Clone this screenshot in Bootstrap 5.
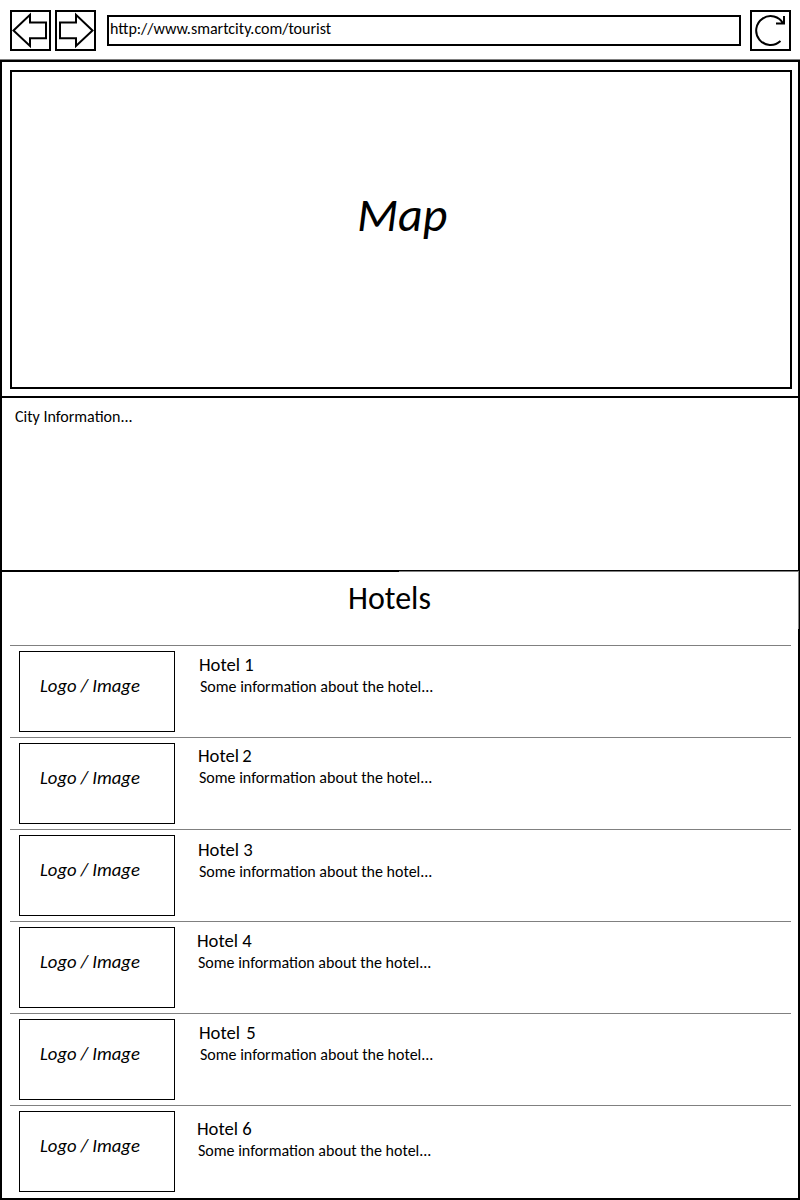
<!DOCTYPE html>
<html lang="en">
<head>
<meta charset="utf-8">
<meta name="viewport" content="width=device-width, initial-scale=1">
<title>Smart City – Tourist</title>
<link href="https://cdn.jsdelivr.net/npm/bootstrap@5.3.0/dist/css/bootstrap.min.css" rel="stylesheet">
<style>
body{font-family:Calibri,Carlito,Lato,sans-serif;font-size:16px;color:#000;background:#fff;width:800px;height:1200px;overflow:hidden}
.ln{white-space:nowrap;line-height:20px;margin:0;font-weight:400}
.toolbar-top{height:59px;padding:10px 9px 0 10px}
.sq{width:41px;height:41px;border:2px solid #000;border-radius:0;background:#fff;padding:0;flex:none}
.sq + .sq{margin-left:4px}
.sq svg{display:block;fill:none;stroke:#000;stroke-width:2}
.address{width:634px;height:31px;margin:5px 9px 0 11px;border:2px solid #000;padding:2px 0 0 1px}
.frame{height:1141px;border:2px solid #000;border-top:0}
.topline{height:3px;margin:0 -2px;background:#000;border-top:1px solid #808080}
.map-box{width:782px;height:319px;margin:8px 0 7px 8px;border:2px solid #000;padding:113px 0 0 345px;font-size:48px}
.map-box .ln{line-height:60px}
.city{height:174px;border-top:2px solid #000;padding:9px 0 0 13px}
.hotels-head{height:75px;padding:8px 0 0 346px;position:relative;border-top:1px solid #000}
.hotels-head::before{content:"";position:absolute;left:0;top:0;width:397px;height:1px;background:#000}
.hotels-head::after{content:"";position:absolute;left:397px;right:-1px;top:0;height:58px;border:solid #808080;border-width:1px 1px 0 0}
.hotels-head .ln{line-height:40px;font-size:32px}
.hotel{height:92px;width:781px;margin-left:8px;border-top:1px solid #808080;padding:5px 0 0 9px}
.logo-box{width:156px;height:81px;border:1px solid #000;padding:24px 0 0 20px;font-size:18.67px;flex:none}
.details{margin:3px 0 0 24px}
.details.n2{margin:2px 0 0 23px}
.details.n3{margin:4px 0 0 23px}
.details.n4{margin:3px 0 0 22px}
.details.n6{margin:7px 0 0 22px}
.n5 .num{margin-left:2px}
.n2 .num{margin-left:-1px}
.h-name{font-size:18.67px;line-height:21px}
.h-info{padding:2px 0 0 1px}
</style>
</head>
<body>
<header class="toolbar-top d-flex align-items-start">
  <button class="btn sq" aria-label="Back"><svg width="37" height="37" viewBox="12 12 37 37"><path d="M13.5 30.5L30 14.8V22.6H46V38.2H30V46Z"/></svg></button>
  <button class="btn sq" aria-label="Forward"><svg width="37" height="37" viewBox="57 12 37 37"><path d="M92.5 30.5L76 14.8V22.6H60V38.2H76V46Z"/></svg></button>
  <div class="address"><div class="ln">http://www.smartcity.com/tourist</div></div>
  <button class="btn sq" aria-label="Reload"><svg width="37" height="37" viewBox="752 12 37 37"><path d="M780.5 41A14.4 14.4 0 1 1 783.2 23.6M784 16V23.4H776"/></svg></button>
</header>
<main class="frame">
  <div class="topline"></div>
  <section class="map-box"><div class="ln fst-italic">Map</div></section>
  <section class="city"><p class="ln">City Information...</p></section>
  <section class="hotels-head"><h1 class="ln">Hotels</h1></section>
  <article class="hotel d-flex"><div class="logo-box ln fst-italic">Logo / Image</div><div class="details n1"><h2 class="ln h-name">Hotel <span class="num">1</span></h2><p class="ln h-info">Some information about the hotel...</p></div></article>
  <article class="hotel d-flex"><div class="logo-box ln fst-italic">Logo / Image</div><div class="details n2"><h2 class="ln h-name">Hotel <span class="num">2</span></h2><p class="ln h-info">Some information about the hotel...</p></div></article>
  <article class="hotel d-flex"><div class="logo-box ln fst-italic">Logo / Image</div><div class="details n3"><h2 class="ln h-name">Hotel <span class="num">3</span></h2><p class="ln h-info">Some information about the hotel...</p></div></article>
  <article class="hotel d-flex"><div class="logo-box ln fst-italic">Logo / Image</div><div class="details n4"><h2 class="ln h-name">Hotel <span class="num">4</span></h2><p class="ln h-info">Some information about the hotel...</p></div></article>
  <article class="hotel d-flex"><div class="logo-box ln fst-italic">Logo / Image</div><div class="details n5"><h2 class="ln h-name">Hotel <span class="num">5</span></h2><p class="ln h-info">Some information about the hotel...</p></div></article>
  <article class="hotel d-flex"><div class="logo-box ln fst-italic">Logo / Image</div><div class="details n6"><h2 class="ln h-name">Hotel <span class="num">6</span></h2><p class="ln h-info">Some information about the hotel...</p></div></article>
</main>
<script src="https://cdn.jsdelivr.net/npm/bootstrap@5.3.0/dist/js/bootstrap.bundle.min.js"></script>
</body>
</html>
